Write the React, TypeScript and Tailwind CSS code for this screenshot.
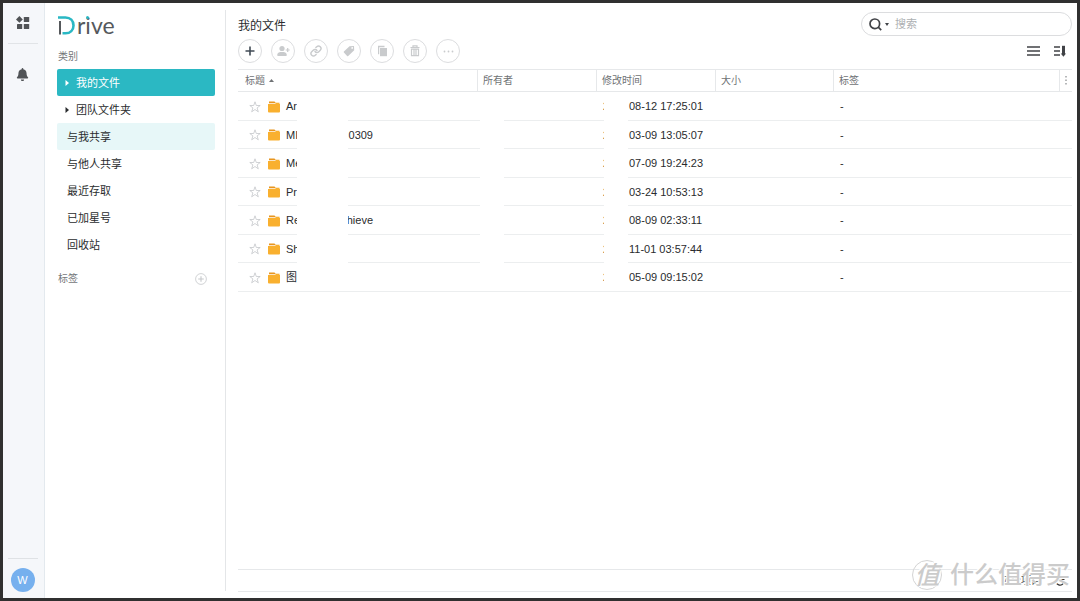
import { useState } from "react";
import type { ReactNode } from "react";
import { FaBell } from "react-icons/fa";

interface FileRow {
  head: string;
  tail?: string;
  date: string;
}

const files: FileRow[] = [
  { head: "Ar", date: "08-12 17:25:01" },
  { head: "MI", tail: "0309", date: "03-09 13:05:07" },
  { head: "Me", date: "07-09 19:24:23" },
  { head: "Pr", date: "03-24 10:53:13" },
  { head: "Re", tail: "hieve", date: "08-09 02:33:11" },
  { head: "Sh", date: "11-01 03:57:44" },
  { head: "图", date: "05-09 09:15:02" },
];

const menu = [
  { label: "我的文件", tree: true },
  { label: "团队文件夹", tree: true },
  { label: "与我共享" },
  { label: "与他人共享" },
  { label: "最近存取" },
  { label: "已加星号" },
  { label: "回收站" },
];

function Logo() {
  return (
    <h1 className="flex h-[22px] items-center gap-[2px] text-[#55595c]" aria-label="Drive">
      <svg width="17" height="19" viewBox="0 0 17 19" fill="none" aria-hidden="true">
        <path d="M2 5v13.500" stroke="#55595c" strokeWidth="2" />
        <path d="M0 1.500h7.500c4.800 0 8 3.200 8 7.900s-3.200 7.900-8 7.900H4.500" stroke="#2ab8c4" strokeWidth="2.600" />
      </svg>
      <span className="relative font-['Lato'] text-[23px] leading-[22px]">
        rive
        <i className="absolute left-[9px] top-[2px] size-[3px] rounded-full bg-[#2ab8c4]" />
      </span>
    </h1>
  );
}

function Star() {
  return (
    <svg width="12" height="12" viewBox="0 0 12 12" fill="none" stroke="#c4c7ca" strokeWidth="0.8">
      <path d="M6 .8l1.300 3.700h3.900L8.100 6.900l1.200 3.900L6 8.500l-3.300 2.300 1.200-3.900L.8 4.500h3.900z" />
    </svg>
  );
}

function Folder() {
  return (
    <svg width="12" height="12" viewBox="0 0 12 12">
      <path d="M1 .6h5.500L8 2.200H1z" fill="#e8951f" />
      <path d="M0 3h12v7.500a1 1 0 0 1-1 1H1a1 1 0 0 1-1-1z" fill="#f9b02f" />
      <path d="M7.500 1.700H11.500V3h-4z" fill="#f9b02f" />
    </svg>
  );
}

function ToolButton({ label, dark, children }: { label: string; dark?: boolean; children: ReactNode }) {
  return (
    <button
      aria-label={label}
      className={`flex size-6 cursor-pointer items-center justify-center rounded-full border border-[#dcdddf] bg-white ${dark ? "text-[#414b55]" : "text-[#c9cbcd]"}`}
    >
      {children}
    </button>
  );
}

function Toolbar() {
  return (
    <div className="flex gap-[9px]">
      <ToolButton label="新增" dark>
        <svg width="10" height="10" viewBox="0 0 10 10" stroke="currentColor" strokeWidth="1.600">
          <path d="M5 .5v9M.5 5h9" />
        </svg>
      </ToolButton>
      <ToolButton label="共享">
        <svg width="13" height="12" viewBox="0 0 13 12" fill="currentColor">
          <circle cx="5" cy="3.500" r="2.600" />
          <path d="M.4 11V9.300C.4 7.600 2.500 7 5 7s4.600.6 4.600 2.300V11z" />
          <path d="M10.700 3v4M8.700 5h4" stroke="currentColor" strokeWidth="1.200" />
        </svg>
      </ToolButton>
      <ToolButton label="链接">
        <svg width="12" height="12" viewBox="0 0 24 24" fill="none" stroke="currentColor" strokeWidth="2.800" strokeLinecap="round">
          <path d="M10 13a5 5 0 0 0 7.540.540l3-3a5 5 0 0 0-7.070-7.070l-1.720 1.710" />
          <path d="M14 11a5 5 0 0 0-7.540-.540l-3 3a5 5 0 0 0 7.070 7.070l1.710-1.710" />
        </svg>
      </ToolButton>
      <ToolButton label="标签">
        <svg width="12" height="12" viewBox="0 0 12 12" fill="currentColor">
          <path fillRule="evenodd" d="M6.500 1.200 11 .9l.2 4.300-6 5.800a.8.800 0 0 1-1.100 0L.9 7.600a.8.800 0 0 1 0-1.100zM9.200 2a.9.900 0 1 0 0 1.800.9.900 0 0 0 0-1.800z" />
        </svg>
      </ToolButton>
      <ToolButton label="复制">
        <svg width="11" height="12" viewBox="0 0 11 12" fill="currentColor">
          <path d="M1 .8h6.500v1.400H2.200v7H1z" />
          <path d="M3 3h7v8.200H3z" />
        </svg>
      </ToolButton>
      <ToolButton label="删除">
        <svg width="10" height="12" viewBox="0 0 10 12" fill="none" stroke="currentColor" strokeWidth="1.200">
          <path d="M.5 2.500h9M3 2V.9h4V2M1.500 4.200h7v6.500h-7zM4 4v6.500M6 4v6.500" />
        </svg>
      </ToolButton>
      <ToolButton label="更多">
        <svg width="11" height="3" viewBox="0 0 11 3" fill="currentColor">
          <circle cx="1.500" cy="1.500" r=".9" />
          <circle cx="5.500" cy="1.500" r=".9" />
          <circle cx="9.500" cy="1.500" r=".9" />
        </svg>
      </ToolButton>
    </div>
  );
}

function Rail() {
  return (
    <div className="flex w-[42px] shrink-0 flex-col items-center border-r border-[#e3e9ee] bg-[#f5f7fa] pb-[6px] pr-[2px] pt-[13px] text-[#505356]">
      <button aria-label="应用">
        <svg width="14" height="14" viewBox="0 0 14 14" fill="currentColor">
          <path d="M3.400 0l3.400 3.400-3.400 3.400L0 3.400z" />
          <rect x="7.800" y="1" width="5.400" height="5" rx=".6" />
          <rect x="1" y="8" width="5.200" height="5" rx=".6" />
          <rect x="7.800" y="8" width="5.400" height="5" rx=".6" />
        </svg>
      </button>
      <hr className="mt-[13px] w-[30px] border-[#e1e4e7]" />
      <button aria-label="通知" className="mt-6">
        <FaBell size={13} />
      </button>
      <hr className="mt-auto w-[30px] border-[#dfe2e5]" />
      <button className="mt-[9px] size-6 rounded-full bg-[#76b0ee] text-[11px] text-white">W</button>
    </div>
  );
}

function Sidebar() {
  const [active, setActive] = useState(0);
  return (
    <aside className="my-[7px] w-[181px] shrink-0 border-r border-[#e4e6e8] pl-3 pr-[10px]">
      <div className="mt-1 pl-px">
        <Logo />
      </div>
      <h2 className="mt-[14px] pl-px text-[10px] leading-[14px] text-[#74777a]">类别</h2>
      <nav className="mt-[5px]">
        {menu.map((item, index) => (
          <button
            key={item.label}
            onClick={() => setActive(index)}
            className={`flex h-[27px] w-full items-center rounded-[2px] pt-px text-left text-[11px] ${
              index === active ? "bg-[#2bb8c3] text-white" : index === 2 ? "bg-[#e7f7f8]" : ""
            } ${item.tree ? "gap-[7px] pl-2" : "pl-[10px]"}`}
          >
            {item.tree && (
              <svg width="4" height="6" viewBox="0 0 4 6" fill="currentColor">
                <path d="M.5 0L4 3 .5 6z" />
              </svg>
            )}
            {item.label}
          </button>
        ))}
      </nav>
      <div className="mt-[14px] flex items-center justify-between pl-px pr-2">
        <h2 className="text-[10px] leading-[14px] text-[#74777a]">标签</h2>
        <button aria-label="新增标签" className="text-[#c5c8ca]">
          <svg width="12" height="12" viewBox="0 0 12 12" fill="none" stroke="currentColor">
            <circle cx="6" cy="6" r="5.400" strokeWidth=".8" />
            <path d="M6 3.200v5.600M3.200 6h5.600" strokeWidth="1.100" />
          </svg>
        </button>
      </div>
    </aside>
  );
}

function FileTable() {
  return (
    <div className="relative mt-[6px]">
      <table className="w-full table-fixed border-separate border-spacing-0 text-left">
        <thead className="text-[10px] text-[#6f7275]">
          <tr className="h-[23px] *:border-y *:border-[#e6e8ea] *:p-0 *:font-normal *:leading-none">
            <th className="w-[240px] border-r pl-[7px]!">
              <span className="flex items-center gap-1">
                标题
                <svg width="5" height="3" viewBox="0 0 5 3" fill="currentColor">
                  <path d="M0 3L2.500 0 5 3z" />
                </svg>
              </span>
            </th>
            <th className="w-[119px] border-r pl-[5px]!">所有者</th>
            <th className="w-[119px] border-r pl-[5px]!">修改时间</th>
            <th className="w-[118px] border-r pl-[5px]!">大小</th>
            <th className="border-r pl-[5px]!">标签</th>
            <th className="w-3">
              <button aria-label="列" className="flex w-full justify-center">
                <svg width="2" height="9" viewBox="0 0 2 9" fill="currentColor">
                  <path d="M.5 0h1v1.500h-1zM.5 3.500h1V5h-1zM.5 7h1v1.500h-1z" />
                </svg>
              </button>
            </th>
          </tr>
        </thead>
        <tbody className="text-[11px] text-[#2a2c2e]">
          {files.map((file) => (
            <tr key={file.date} className="odd:h-[29px] even:h-7 *:border-b *:border-[#eceeef] *:p-0 *:pt-px *:leading-none">
              <td>
                <div className="flex items-center pl-[11px]">
                  <Star />
                  <span className="ml-[7px]">
                    <Folder />
                  </span>
                  <span className="ml-[6px] w-[58px]">{file.head}</span>
                  <span className="w-[29px] text-right">{file.tail}</span>
                </div>
              </td>
              <td />
              <td>
                <div className="flex pl-[6px]">
                  <span className="w-[26px]">2</span>
                  <span className="whitespace-nowrap">{file.date}</span>
                </div>
              </td>
              <td />
              <td className="pl-[6px]!">-</td>
              <td />
            </tr>
          ))}
        </tbody>
      </table>
      {/* blanked-out strips over the private parts of the rows */}
      <div className="absolute bottom-px left-[59px] top-6 w-[51px] bg-white" />
      <div className="absolute bottom-px left-[242px] top-6 w-6 bg-white" />
      <div className="absolute bottom-px left-[366px] top-6 w-6 bg-white" />
    </div>
  );
}

function Watermark() {
  return (
    <div className="pointer-events-none absolute -top-[10px] right-[2px] flex items-center gap-2 font-medium text-[#cbcbcb] [text-shadow:1px_1px_0_#fff,-1px_-1px_0_#fff]">
      <span className="flex size-[30px] items-center justify-center rounded-full border border-[#d4d4d4] text-[25px] italic leading-none">
        值
      </span>
      <span className="text-[24px] leading-[30px]">什么值得买</span>
    </div>
  );
}

export default function App() {
  return (
    <div className="flex h-screen border-3 border-[#303030] bg-white font-['Liberation_Sans','Noto_Sans_CJK_SC',sans-serif] text-[#2a2c2e]">
      <Rail />
      <Sidebar />
      <main className="flex min-w-0 flex-1 flex-col pb-[6px] pl-3 pr-[5px]">
        <header className="flex items-start justify-between pt-[9px]">
          <h2 className="pt-[5px] text-[12px] leading-[18px]">我的文件</h2>
          <label className="flex h-6 w-[211px] items-center rounded-full border border-[#dcdddf] pl-[7px] text-[#414347]">
            <svg width="13" height="13" viewBox="0 0 13 13" fill="none" stroke="currentColor" strokeWidth="1.700">
              <circle cx="5.800" cy="5.800" r="4.800" />
              <path d="M9.200 9.200l3 3" />
            </svg>
            <svg className="ml-[3px]" width="4" height="3" viewBox="0 0 4 3" fill="currentColor">
              <path d="M0 0h4L2 3z" />
            </svg>
            <input aria-label="搜索" placeholder="搜索" className="ml-[6px] w-40 text-[11px] outline-none placeholder:text-[#adb0b2]" />
          </label>
        </header>
        <div className="mt-[3px] flex items-center justify-between">
          <Toolbar />
          <div className="flex gap-[14px] pr-[6px] text-[#414347]">
            <button aria-label="列表">
              <svg width="13" height="12" viewBox="0 0 13 12" stroke="currentColor" strokeWidth="1.400">
                <path d="M0 2h13M0 6h13M0 10h13" />
              </svg>
            </button>
            <button aria-label="排序">
              <svg width="12" height="12" viewBox="0 0 12 12" stroke="currentColor" strokeWidth="1.400">
                <path d="M0 2h6M0 6h6M0 10h6" />
                <path d="M9.500 .8v8.500" strokeWidth="3" />
                <path d="M6.800 8.500h5.200l-2.600 3.200z" fill="currentColor" stroke="none" />
              </svg>
            </button>
          </div>
        </div>
        <FileTable />
        <footer className="relative mt-auto flex h-[23px] items-center justify-end gap-[14px] border-y border-[#e6e8ea] pr-[7px] text-[10px] text-[#505356]">
          <span>7 个项目</span>
          <button aria-label="刷新">
            <svg width="10" height="10" viewBox="0 0 10 10" fill="none" stroke="#333" strokeWidth="1.300">
              <path d="M9 5.500A4 4 0 1 1 7.800 2.200" />
              <path d="M9.500 0v4h-4z" fill="#333" stroke="none" />
            </svg>
          </button>
          <Watermark />
        </footer>
      </main>
    </div>
  );
}
